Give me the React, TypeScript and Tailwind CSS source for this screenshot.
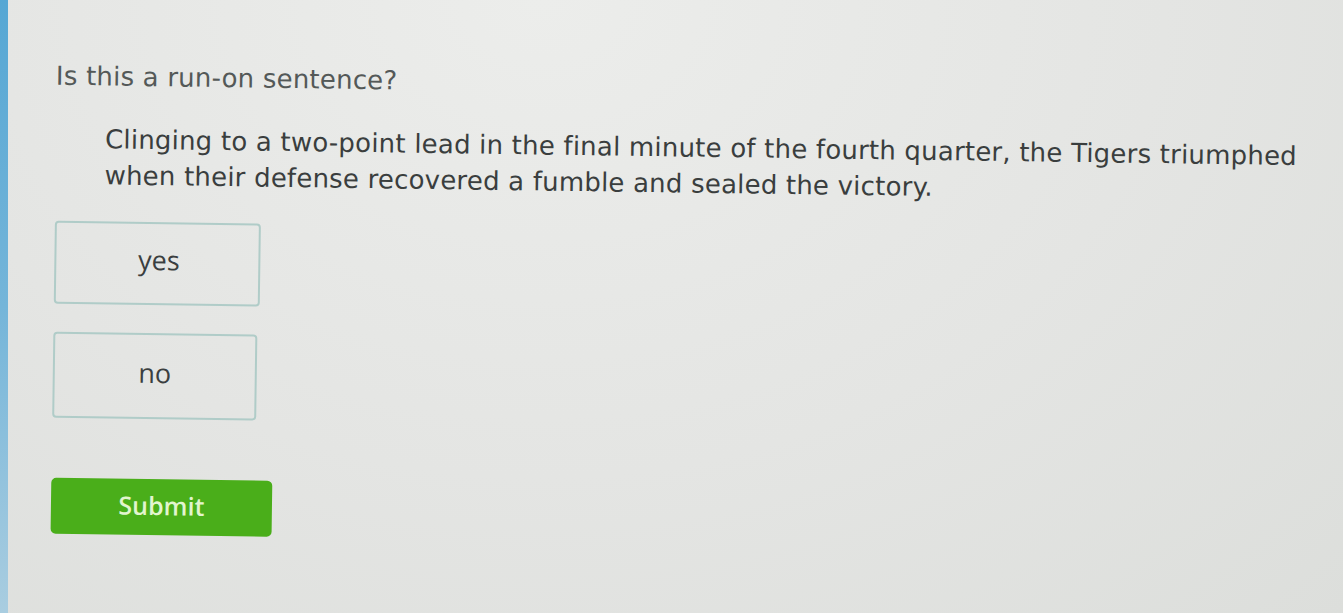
import React from "react";

export default function App() {
  return (
    <div
      className="flex h-[613px] w-[1343px] overflow-hidden bg-[#e2e3e1]"
      style={{ fontFamily: '"DejaVu Sans", Verdana, sans-serif' }}
    >
      <div className="w-[8px] shrink-0 bg-gradient-to-b from-[#56a7d4] via-[#74b5d9] to-[#a9cde0]" />
      <div className="flex-1 bg-[radial-gradient(ellipse_at_40%_0%,#ecedeb_0%,#e4e5e3_55%,#dcdedb_100%)]">
        <div className="flex origin-top-left rotate-[0.8deg] flex-col pl-[49px] pt-[57px]">
          <div className="text-[26px] leading-[36px] tracking-[0.2px] text-[#545958]">Is this a run-on sentence?</div>
          <div className="mt-[27px] flex flex-col pl-[50px] text-[26px] leading-[36px] tracking-[0.2px] text-[#3a3e3e] whitespace-nowrap">
            <span>Clinging to a two-point lead in the final minute of the fourth quarter, the Tigers triumphed</span>
            <span>when their defense recovered a fumble and sealed the victory.</span>
          </div>
          <div
            className="mt-[28px] flex flex-col gap-[28px] text-[27px] text-[#3b3f40]"
            style={{ fontFamily: '"Open Sans", Lato, sans-serif' }}
          >
            <div className="ml-[1px] flex h-[83px] w-[206px] items-center justify-center rounded-[4px] border-2 border-[#b0ccc8] pb-[6px] pl-[3px]">
              yes
            </div>
            <div className="ml-[1px] flex h-[86px] w-[204px] items-center justify-center rounded-[4px] border-2 border-[#b0ccc8] pb-[6px]">
              no
            </div>
          </div>
          <div
            className="ml-[1px] mt-[60px] flex h-[56px] w-[221px] items-center justify-center rounded-[5px] bg-[#4aae1a] pb-[2px] text-[25px] font-semibold text-[#e2f5cf]"
            style={{ fontFamily: '"Open Sans", Lato, sans-serif' }}
          >
            Submit
          </div>
        </div>
      </div>
    </div>
  );
}
